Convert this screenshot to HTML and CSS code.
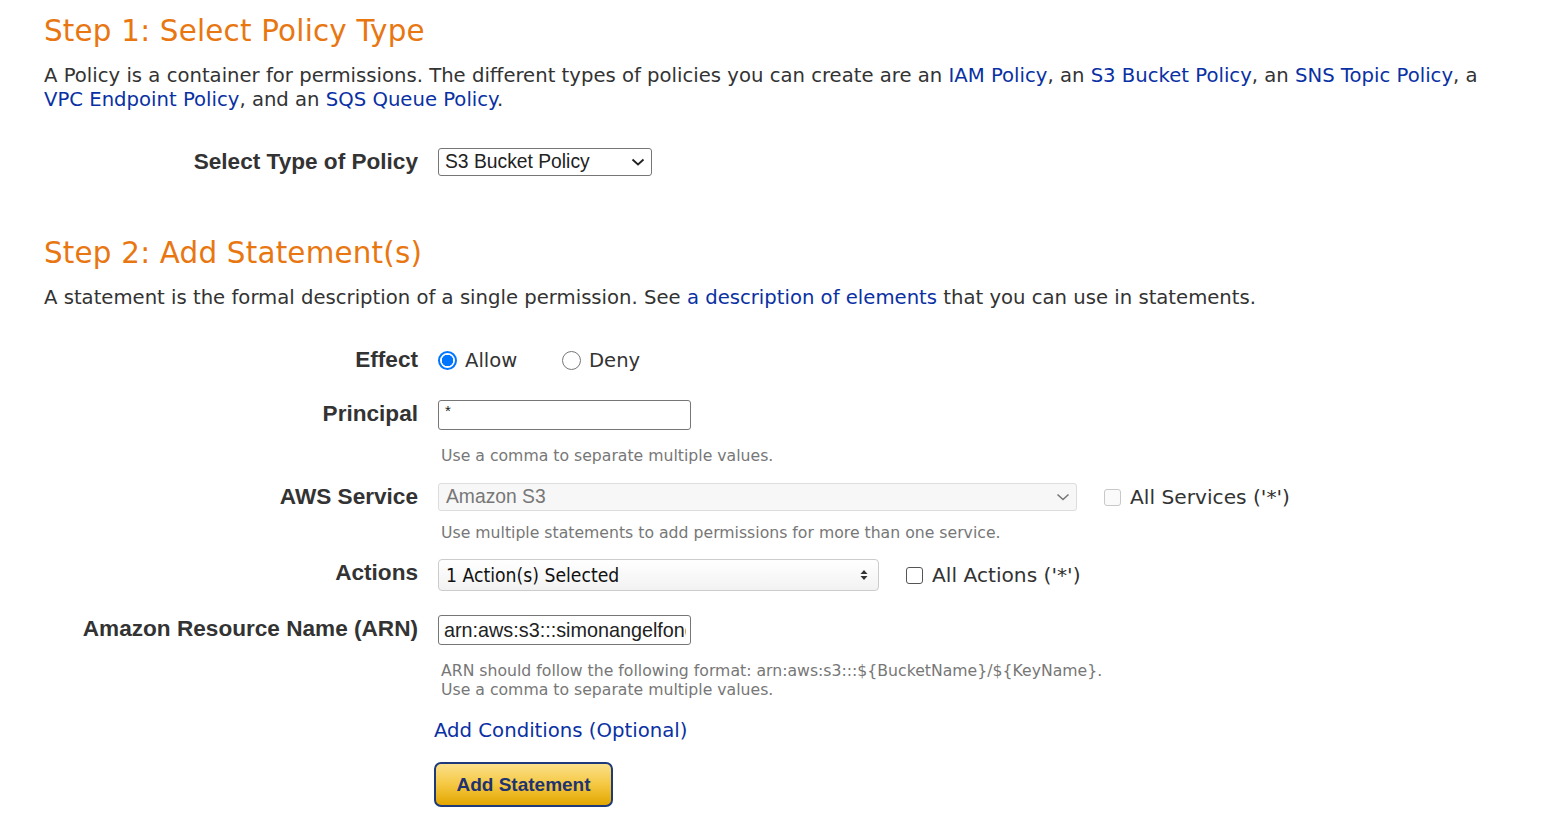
FILE: index.html
```html
<!DOCTYPE html>
<html>
<head>
<meta charset="utf-8">
<link rel="stylesheet" href="styles.css">
</head>
<body>
<div class="page">
  <h1 class="step">Step 1: Select Policy Type</h1>
  <p class="intro">A Policy is a container for permissions. The different types of policies you can create are an <a href="#">IAM Policy</a>, an <a href="#">S3 Bucket Policy</a>, an <a href="#">SNS Topic Policy</a>, a <a href="#">VPC Endpoint Policy</a>, and an <a href="#">SQS Queue Policy</a>.</p>

  <div class="row row-type">
    <div class="label">Select Type of Policy</div>
    <div class="field">
      <div class="select select-type">
        <span>S3 Bucket Policy</span>
        <svg width="14" height="10" viewBox="0 0 14 10"><path d="M1.5 2.5 L7 7.5 L12.5 2.5" fill="none" stroke="#222" stroke-width="1.8"/></svg>
      </div>
    </div>
  </div>

  <h1 class="step step2">Step 2: Add Statement(s)</h1>
  <p class="intro">A statement is the formal description of a single permission. See <a href="#">a description of elements</a> that you can use in statements.</p>

  <div class="row row-effect">
    <div class="label">Effect</div>
    <div class="field radios">
      <label class="radio-opt"><span class="radio on"></span>Allow</label>
      <label class="radio-opt"><span class="radio"></span>Deny</label>
    </div>
  </div>

  <div class="row row-principal">
    <div class="label">Principal</div>
    <div class="field">
      <div class="input input-principal">*</div>
      <div class="hint">Use a comma to separate multiple values.</div>
    </div>
  </div>

  <div class="row row-service">
    <div class="label">AWS Service</div>
    <div class="field">
      <div class="inline">
        <div class="select select-service">
          <span>Amazon S3</span>
          <svg width="14" height="10" viewBox="0 0 14 10"><path d="M1.5 2.5 L7 7.5 L12.5 2.5" fill="none" stroke="#777" stroke-width="1.6"/></svg>
        </div>
        <label class="check-opt disabled"><span class="check"></span>All Services ('*')</label>
      </div>
      <div class="hint">Use multiple statements to add permissions for more than one service.</div>
    </div>
  </div>

  <div class="row row-actions">
    <div class="label">Actions</div>
    <div class="field">
      <div class="inline">
        <div class="select select-actions">
          <span>1 Action(s) Selected</span>
          <svg width="8" height="14" viewBox="0 0 8 14"><path d="M4 2 L7.5 6 H0.5 Z M4 12 L7.5 8 H0.5 Z" fill="#333"/></svg>
        </div>
        <label class="check-opt"><span class="check dark"></span>All Actions ('*')</label>
      </div>
    </div>
  </div>

  <div class="row row-arn">
    <div class="label">Amazon Resource Name (ARN)</div>
    <div class="field">
      <div class="input input-arn"><span class="arn-text">arn:aws:s3:::simonangelfong</span></div>
      <div class="hint hint-arn">ARN should follow the following format: arn:aws:s3:::${BucketName}/${KeyName}.<br>Use a comma to separate multiple values.</div>
    </div>
  </div>

  <div class="actions-area">
    <a href="#" class="conditions">Add Conditions (Optional)</a>
    <button class="btn">Add Statement</button>
  </div>
</div>
</body>
</html>
```

FILE: styles.css
```css
html, body {
  margin: 0;
  padding: 0;
  background: #ffffff;
}
.page {
  padding: 14px 0 0 44px;
  font-family: "DejaVu Sans", Verdana, sans-serif;
  color: #333333;
}
.step {
  margin: 0;
  font-size: 29.4px;
  font-weight: normal;
  color: #e87712;
  line-height: 34px;
  letter-spacing: 0.2px;
}
.step2 {
  margin-top: 60px;
}
.intro {
  margin: 16px 0 0 0;
  font-size: 19.65px;
  line-height: 24px;
  width: 1460px;
}
.intro a {
  color: #0a31a3;
  text-decoration: none;
}
.row {
  display: grid;
  grid-template-columns: 374px auto;
  column-gap: 20px;
  align-items: start;
}
.label {
  text-align: right;
  font-family: "Liberation Sans", Arial, sans-serif;
  font-weight: bold;
  font-size: 22.6px;
  line-height: 28px;
  color: #333333;
  white-space: nowrap;
}
.field {
  display: flex;
  flex-direction: column;
}
.inline {
  display: flex;
  align-items: center;
}
.row-type {
  margin-top: 36px;
}
.select {
  box-sizing: border-box;
  display: flex;
  align-items: center;
  justify-content: space-between;
  font-family: "Liberation Sans", Arial, sans-serif;
  font-size: 19.3px;
  color: #222;
  border-radius: 3px;
  white-space: nowrap;
}
.select-type {
  width: 214px;
  height: 28px;
  border: 1px solid #767676;
  padding: 0 6px 0 6px;
}
.row-effect {
  margin-top: 36px;
}
.radios {
  flex-direction: row;
  align-items: center;
  height: 28px;
}
.radio-opt {
  display: flex;
  align-items: center;
  font-size: 19.6px;
  color: #333;
  width: 124px;
}
.radio {
  box-sizing: border-box;
  width: 19px;
  height: 19px;
  border-radius: 50%;
  border: 1.5px solid #767676;
  margin-right: 8px;
  background: #fff;
  flex: none;
}
.radio.on {
  border: 2px solid #0075ff;
  background: radial-gradient(circle, #0075ff 0 5.5px, #fff 6px);
}
.row-principal {
  margin-top: 26px;
}
.input {
  box-sizing: border-box;
  width: 253px;
  height: 30px;
  border: 1px solid #767676;
  border-radius: 3px;
  padding: 2px 6px 0 6px;
  font-family: "Liberation Sans", Arial, sans-serif;
  font-size: 19.3px;
  line-height: 24px;
  color: #222;
  overflow: hidden;
  white-space: nowrap;
}
.input-principal {
  font-size: 15px;
  padding-top: 0;
  line-height: 20px;
}
.hint {
  font-family: "DejaVu Sans", Verdana, sans-serif;
  font-size: 15.7px;
  line-height: 19px;
  color: #777777;
  margin-left: 3px;
  white-space: nowrap;
}
.row-principal .hint {
  margin-top: 16px;
}
.row-service {
  margin-top: 18px;
}
.select-service {
  width: 639px;
  height: 28px;
  border: 1px solid #dddddd;
  background: #f7f7f7;
  color: #777;
  padding: 0 6px 0 7px;
}
.check-opt {
  display: flex;
  align-items: center;
  font-size: 20.2px;
  color: #333;
  margin-left: 27px;
  white-space: nowrap;
}
.check {
  box-sizing: border-box;
  width: 17px;
  height: 17px;
  border: 1px solid #c8c8c8;
  border-radius: 3px;
  background: #fafafa;
  margin-right: 9px;
  flex: none;
}
.check.dark {
  border: 1.5px solid #555;
  background: #fff;
}
.row-service .hint {
  margin-top: 12px;
}
.row-actions {
  margin-top: 17px;
}
.select-actions {
  width: 441px;
  height: 32px;
  border: 1px solid #cccccc;
  background: linear-gradient(#ffffff, #f2f2f2);
  font-family: "DejaVu Sans Condensed", "DejaVu Sans", sans-serif;
  font-size: 19.2px;
  color: #111;
  padding: 0 10px 0 7px;
  border-radius: 4px;
}
.row-arn {
  margin-top: 24px;
}
.input-arn {
  padding: 2px 4px 0 5px;
}
.arn-text {
  display: block;
  overflow: hidden;
  font-size: 19.8px;
}
.hint-arn {
  margin-top: 16px;
}
.actions-area {
  margin-left: 390px;
  display: flex;
  flex-direction: column;
  align-items: flex-start;
}
.conditions {
  margin-top: 19px;
  font-size: 19.7px;
  line-height: 26px;
  color: #0a31a3;
  text-decoration: none;
}
.btn {
  margin-top: 18px;
  width: 179px;
  height: 45px;
  border: 2px solid #1e3a7b;
  border-radius: 7px;
  background: linear-gradient(#fbe08a, #f5c842 50%, #e2a600);
  font-family: "Liberation Sans", Arial, sans-serif;
  font-weight: bold;
  font-size: 19px;
  color: #1e3370;
  padding: 0;
}
```
